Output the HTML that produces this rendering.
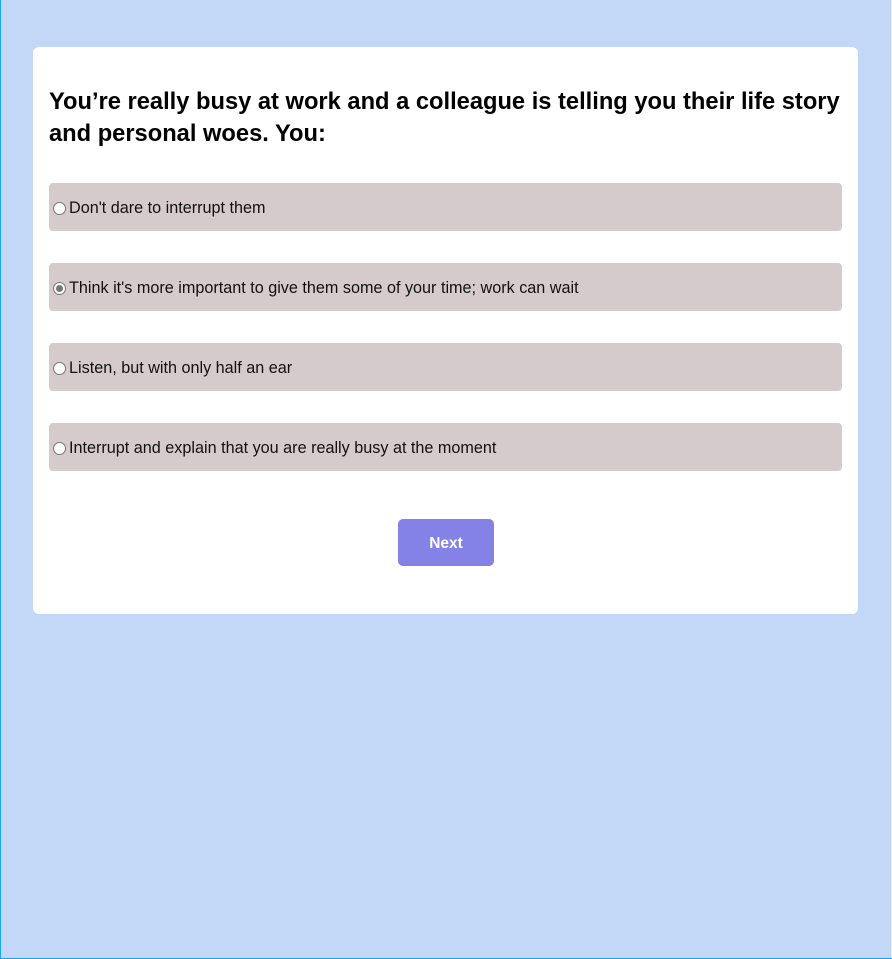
<!DOCTYPE html>
<html><head><style>
html,body{margin:0;padding:0}
body{width:892px;height:959px;background:#c3d7f7;position:relative;overflow:hidden;font-family:"Liberation Sans",sans-serif}
.bl{position:absolute;left:0;top:0;width:1px;height:959px;background:#1aa3f0}
.bb{position:absolute;left:0;bottom:0;width:892px;height:1px;background:#1aa3f0}
.br{position:absolute;right:0;top:0;width:1px;height:958px;background:#e8eef8}
.card{position:absolute;left:33px;top:47px;width:825px;height:567px;background:#fff;border-radius:6px}
h1{position:absolute;left:16px;top:39px;margin:0;width:805px;font-size:23.7px;line-height:32px;font-weight:bold;color:#000}
.opt{position:absolute;left:16px;width:793px;height:48px;background:#d5cbcc;border-radius:4px;font-size:16.2px;color:#111;display:flex;align-items:center;padding-top:2px;box-sizing:border-box}
.r{width:13px;height:13px;border:1px solid #767676;border-radius:50%;background:#fff;margin:0 3px 0 4px;box-sizing:border-box;position:relative;flex:none}
.r.on::after{content:"";position:absolute;left:2px;top:2px;width:7px;height:7px;border-radius:50%;background:#777}
.btn{position:absolute;left:365px;top:472px;width:96px;height:47px;background:#8482e6;border-radius:5px;color:#fff;font-weight:bold;font-size:15.5px;display:flex;align-items:center;justify-content:center;padding-top:2px;box-sizing:border-box}
</style></head><body>
<div class="bl"></div><div class="br"></div><div class="bb"></div>
<div class="card">
<h1>You’re really busy at work and a colleague is telling you their life story and personal woes. You:</h1>
<div class="opt" style="top:136px"><span class="r"></span>Don't dare to interrupt them</div>
<div class="opt" style="top:216px"><span class="r on"></span>Think it's more important to give them some of your time; work can wait</div>
<div class="opt" style="top:296px"><span class="r"></span>Listen, but with only half an ear</div>
<div class="opt" style="top:376px"><span class="r"></span>Interrupt and explain that you are really busy at the moment</div>
<div class="btn">Next</div>
</div>
</body></html>
